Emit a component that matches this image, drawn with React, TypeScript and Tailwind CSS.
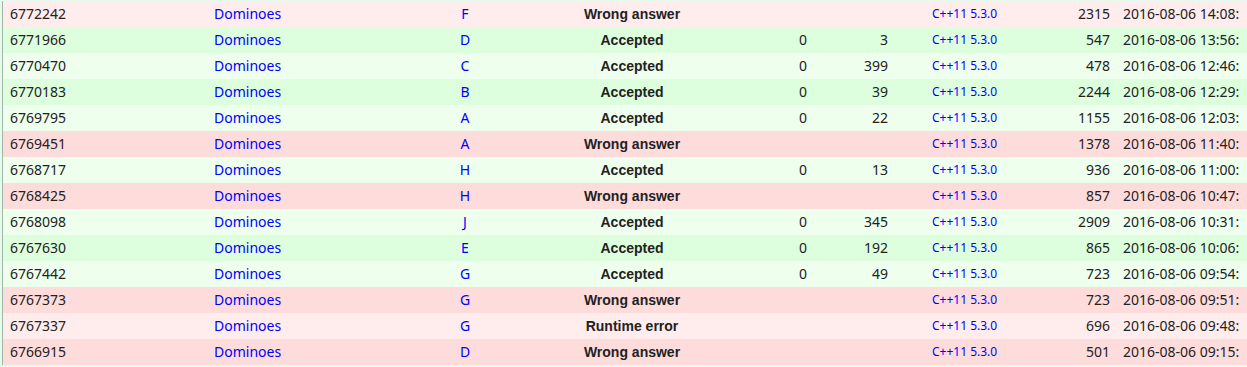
import React from 'react';

const rows = [
  { id: '6772242', p: 'F', v: 'Wrong answer', t: '', m: '', n: '2315', d: '2016-08-06 14:08:' },
  { id: '6771966', p: 'D', v: 'Accepted', t: '0', m: '3', n: '547', d: '2016-08-06 13:56:' },
  { id: '6770470', p: 'C', v: 'Accepted', t: '0', m: '399', n: '478', d: '2016-08-06 12:46:' },
  { id: '6770183', p: 'B', v: 'Accepted', t: '0', m: '39', n: '2244', d: '2016-08-06 12:29:' },
  { id: '6769795', p: 'A', v: 'Accepted', t: '0', m: '22', n: '1155', d: '2016-08-06 12:03:' },
  { id: '6769451', p: 'A', v: 'Wrong answer', t: '', m: '', n: '1378', d: '2016-08-06 11:40:' },
  { id: '6768717', p: 'H', v: 'Accepted', t: '0', m: '13', n: '936', d: '2016-08-06 11:00:' },
  { id: '6768425', p: 'H', v: 'Wrong answer', t: '', m: '', n: '857', d: '2016-08-06 10:47:' },
  { id: '6768098', p: 'J', v: 'Accepted', t: '0', m: '345', n: '2909', d: '2016-08-06 10:31:' },
  { id: '6767630', p: 'E', v: 'Accepted', t: '0', m: '192', n: '865', d: '2016-08-06 10:06:' },
  { id: '6767442', p: 'G', v: 'Accepted', t: '0', m: '49', n: '723', d: '2016-08-06 09:54:' },
  { id: '6767373', p: 'G', v: 'Wrong answer', t: '', m: '', n: '723', d: '2016-08-06 09:51:' },
  { id: '6767337', p: 'G', v: 'Runtime error', t: '', m: '', n: '696', d: '2016-08-06 09:48:' },
  { id: '6766915', p: 'D', v: 'Wrong answer', t: '', m: '', n: '501', d: '2016-08-06 09:15:' },
];

function rowBg(ok: boolean, i: number) {
  if (ok) return i % 2 === 0 ? 'bg-[#eeffee]' : 'bg-[#ddffdd]';
  return i % 2 === 0 ? 'bg-[#ffecec]' : 'bg-[#ffdcdc]';
}

export default function App() {
  return (
    <div className="w-[1247px] h-[367px] overflow-hidden bg-[#e6fbee] pt-px pl-[2px] text-[#222]" style={{ fontFamily: '"Noto Sans", sans-serif' }}>
      <div className="border-l border-[#9fb8a4] w-[1260px]">
        {rows.map((r, i) => (
          <div key={r.id} className={`flex items-center h-[26px] text-[14px] leading-none whitespace-nowrap ${rowBg(r.v === 'Accepted', i)}`}>
            <div className="w-[197px] pl-[7px]">{r.id}</div>
            <div className="w-[200px] pl-[14px] text-[#0000ff]">Dominoes</div>
            <div className="w-[130px] text-center text-[#0000ff]">{r.p}</div>
            <div className="w-[204px] text-center font-bold" style={{ fontFamily: '"Liberation Sans", Arial, sans-serif' }}>{r.v}</div>
            <div className="w-[73px] text-right">{r.t}</div>
            <div className="w-[81px] text-right">{r.m}</div>
            <div className="w-[112px] pl-[44px] text-[12px] text-[#0000ff]">C++11 5.3.0</div>
            <div className="w-[110px] text-right">{r.n}</div>
            <div className="pl-[13px]">{r.d}</div>
          </div>
        ))}
      </div>
    </div>
  );
}
